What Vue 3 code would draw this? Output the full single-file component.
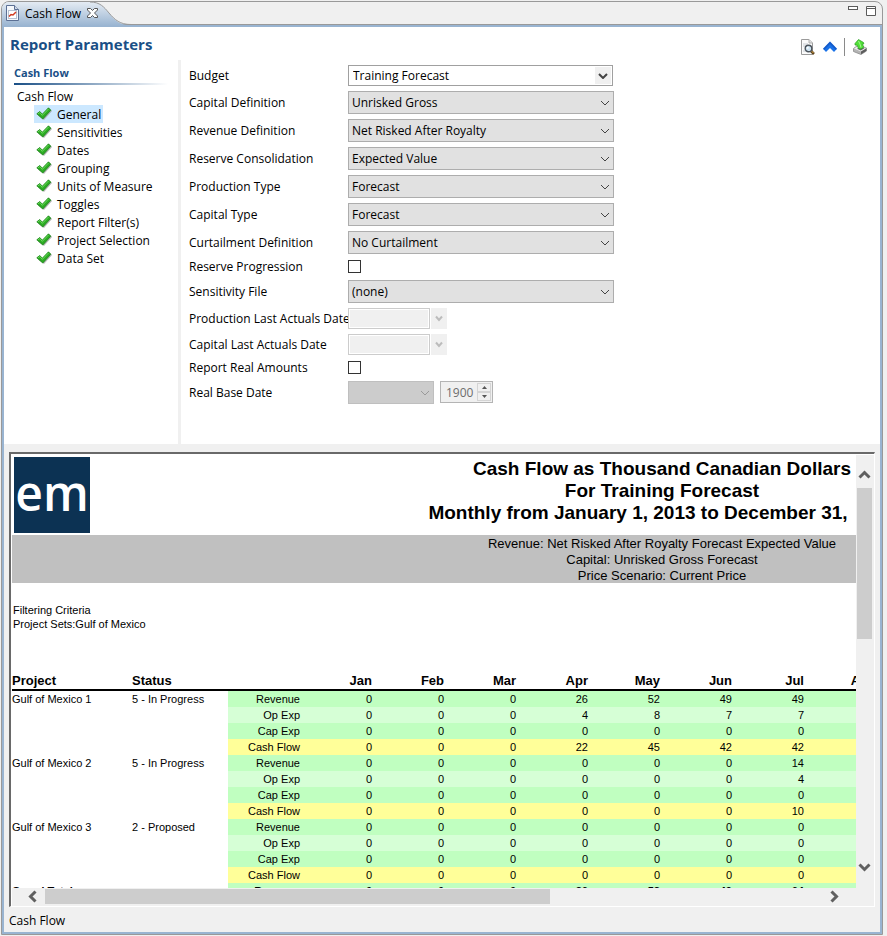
<script setup>
import { ref } from 'vue'

const sections = ['General', 'Sensitivities', 'Dates', 'Grouping', 'Units of Measure', 'Toggles', 'Report Filter(s)', 'Project Selection', 'Data Set']
const selected = ref('General')

const fields = [
  { id: 'budget', label: 'Budget', type: 'combo', value: 'Training Forecast' },
  { id: 'capdef', label: 'Capital Definition', type: 'select', value: 'Unrisked Gross' },
  { id: 'revdef', label: 'Revenue Definition', type: 'select', value: 'Net Risked After Royalty' },
  { id: 'rescon', label: 'Reserve Consolidation', type: 'select', value: 'Expected Value' },
  { id: 'prodtype', label: 'Production Type', type: 'select', value: 'Forecast' },
  { id: 'captype', label: 'Capital Type', type: 'select', value: 'Forecast' },
  { id: 'curtail', label: 'Curtailment Definition', type: 'select', value: 'No Curtailment' },
  { id: 'resprog', label: 'Reserve Progression', type: 'check' },
  { id: 'sens', label: 'Sensitivity File', type: 'select', value: '(none)' },
  { id: 'prodlast', label: 'Production Last Actuals Date', type: 'date' },
  { id: 'caplast', label: 'Capital Last Actuals Date', type: 'date' },
  { id: 'realamt', label: 'Report Real Amounts', type: 'check' },
  { id: 'realbase', label: 'Real Base Date', type: 'base' },
]

const months = ['Jan', 'Feb', 'Mar', 'Apr', 'May', 'Jun', 'Jul', 'Aug']
const zeros = [0, 0, 0, 0, 0, 0, 0]
const projects = [
  {
    name: 'Gulf of Mexico 1',
    status: '5 - In Progress',
    lines: [
      ['Revenue', [0, 0, 0, 26, 52, 49, 49]],
      ['Op Exp', [0, 0, 0, 4, 8, 7, 7]],
      ['Cap Exp', zeros],
      ['Cash Flow', [0, 0, 0, 22, 45, 42, 42]],
    ],
  },
  {
    name: 'Gulf of Mexico 2',
    status: '5 - In Progress',
    lines: [
      ['Revenue', [0, 0, 0, 0, 0, 0, 14]],
      ['Op Exp', [0, 0, 0, 0, 0, 0, 4]],
      ['Cap Exp', zeros],
      ['Cash Flow', [0, 0, 0, 0, 0, 0, 10]],
    ],
  },
  {
    name: 'Gulf of Mexico 3',
    status: '2 - Proposed',
    lines: [['Revenue', zeros], ['Op Exp', zeros], ['Cap Exp', zeros], ['Cash Flow', zeros]],
  },
  {
    name: 'Grand Total:',
    status: '',
    total: true,
    lines: [['Revenue', [0, 0, 0, 26, 52, 49, 64]]],
  },
]
const shade = { Revenue: 'green', 'Op Exp': 'pale', 'Cap Exp': 'green', 'Cash Flow': 'yellow' }
</script>

<template>
  <div class="screen">
    <div class="window">
      <div class="tabbar">
        <div class="tab">
          <svg class="tab-shape" width="130" height="24" viewBox="0 0 130 24" aria-hidden="true">
            <defs>
              <linearGradient id="tabfill" x1="0" y1="0" x2="0" y2="1">
                <stop offset="0" stop-color="#e4ebf3" />
                <stop offset="1" stop-color="#99b4d1" />
              </linearGradient>
            </defs>
            <path d="M0 24V0H90C98 0 102 5 107 11C113 19 118 23 128 23V24Z" fill="url(#tabfill)" />
            <path d="M88 0C98 0 102 5 107 11C113 18 118 22.500 129 22.500" fill="none" stroke="#999" />
          </svg>
          <svg class="tab-icon" width="13" height="16" viewBox="0 0 13 16" aria-hidden="true">
            <path d="M.5 .5H8.500L12.500 4.500V15.500H.5Z" fill="#f4f7fb" stroke="#5b6f94" />
            <path d="M8.500 .5V4.500H12.500" fill="#cfd9e8" stroke="#5b6f94" />
            <rect x="2.500" y="5.500" width="8" height="8" fill="#fff" stroke="#b6c1d2" />
            <path d="M3 11.500L5 9.500L7 10L10 7" fill="none" stroke="#d03a20" stroke-width="1.500" />
          </svg>
          <span class="tab-title">Cash Flow</span>
          <button class="bare" aria-label="Close tab">
            <svg width="11" height="10" viewBox="0 0 11 10">
              <path d="M.5 .5H3.500L5.500 2.500L7.500 .5H10.500V2L7.500 5L10.500 8V9.500H7.500L5.500 7.500L3.500 9.500H.5V8L3.500 5L.5 2Z" fill="#fff" stroke="#555" />
            </svg>
          </button>
        </div>
        <div class="win-buttons">
          <button class="bare" aria-label="Minimize">
            <svg width="10" height="10" viewBox="0 0 10 10"><rect x=".5" y=".5" width="9" height="3" fill="#fff" stroke="#5a5a5a" /></svg>
          </button>
          <button class="bare" aria-label="Maximize">
            <svg width="10" height="10" viewBox="0 0 10 10"><path d="M.5 .5H9.500V9.500H.5Z M.5 2.500H9.500" fill="#fff" stroke="#5a5a5a" /></svg>
          </button>
        </div>
      </div>

      <div class="body">
        <section class="params">
          <header class="params-head">
            <h1>Report Parameters</h1>
            <div class="tools">
              <button class="bare" aria-label="Preview">
                <svg width="16" height="16" viewBox="0 0 16 16">
                  <path d="M1.500 .5H9L12.500 4V15.500H1.500Z" fill="#fbfbfb" stroke="#9a9a9a" />
                  <path d="M9 .5V4H12.500" fill="#e2e2e2" stroke="#b0b0b0" />
                  <path d="M3 5H8M3 7H5M3 12H6" stroke="#c8cdd3" />
                  <path d="M10.500 11.500L14 15" stroke="#5e4520" stroke-width="2.500" />
                  <path d="M11.500 12L13.500 14" stroke="#e0aa4a" />
                  <circle cx="8.500" cy="9.500" r="3.300" fill="#cfe4f2" stroke="#4c545c" stroke-width="1.400" />
                  <circle cx="7.700" cy="8.700" r="1" fill="#fff" />
                </svg>
              </button>
              <button class="bare" aria-label="Collapse">
                <svg width="16" height="16" viewBox="0 0 16 16">
                  <path d="M8 2.500L15 9.800L12 13L8 9L4 13L1 9.800Z" fill="#1a72e8" />
                  <path d="M8 2.500L15 9.800L14 11L8 5L2 11L1 9.800Z" fill="#0b3ea6" opacity=".45" />
                </svg>
              </button>
              <span class="sep"></span>
              <button class="bare" aria-label="Export">
                <svg width="16" height="16" viewBox="0 0 16 16">
                  <path d="M1.500 9.500L5 7L14.500 9V12L9 15.500L1.500 12.500Z" fill="#b4b4b4" stroke="#8a8a8a" stroke-width=".8" />
                  <path d="M2 9.500L9 12.500L14 9.500L7 6.500Z" fill="#ededed" />
                  <path d="M9 12.500V15.200L14.200 12V9.500Z" fill="#5c5c5c" />
                  <path d="M5 9.800L8.800 11.500L12.500 9.300L8 8Z" fill="#6a6a6a" />
                  <path d="M6.500 .5L11.500 3.500L11.800 5L10.200 5.200L12 8L9 10L6.500 9.500L5.200 6.200L3 6L3 4.500Z" fill="#52e038" stroke="#2a9c20" stroke-width=".7" />
                  <path d="M6.500 2L8 5L9 8.500" fill="none" stroke="#a5f78f" />
                </svg>
              </button>
            </div>
          </header>

          <div class="params-body">
            <nav class="side">
              <h2>Cash Flow</h2>
              <div class="rule"></div>
              <p class="root">Cash Flow</p>
              <ul>
                <li v-for="s in sections" :key="s">
                  <button class="node" :class="{ on: s === selected }" @click="selected = s">
                    <svg width="16" height="14" viewBox="0 0 16 14" aria-hidden="true">
                      <path d="M2 8.500L4.500 6L7.500 8.500L14 2L16 4L8 13Z" fill="#9a9a9a" opacity=".7" />
                      <path d="M.8 6.800L3.800 4.500L6.300 7.200L12.500 .8L14.800 3.200L6.800 12Z" fill="#2cab23" stroke="#1b8418" stroke-width=".8" />
                      <path d="M2 6.800L3.800 5.600L6.300 8.400L12.500 2" fill="none" stroke="#6bdc5c" />
                    </svg>
                    <span>{{ s }}</span>
                  </button>
                </li>
              </ul>
            </nav>

            <form class="form" @submit.prevent>
              <template v-for="f in fields" :key="f.id">
                <label :for="f.id">{{ f.label }}</label>
                <div v-if="f.type === 'combo' || f.type === 'select'" class="pick" :class="f.type">
                  <select :id="f.id"><option>{{ f.value }}</option></select>
                  <span class="arrow">
                    <svg width="10" height="6" viewBox="0 0 10 6" aria-hidden="true"><path d="M1 1L5 5L9 1" /></svg>
                  </span>
                </div>
                <div v-else-if="f.type === 'check'" class="check-cell"><input :id="f.id" type="checkbox" class="check" /></div>
                <div v-else-if="f.type === 'date'" class="date">
                  <input :id="f.id" type="text" disabled />
                  <button type="button" disabled aria-label="Pick date">
                    <svg width="8" height="7" viewBox="0 0 8 7"><path d="M1 1.500L4 5L7 1.500" fill="none" stroke="#bcbcbc" stroke-width="2" /></svg>
                  </button>
                </div>
                <div v-else class="base">
                  <div class="pick select off">
                    <select :id="f.id" disabled><option></option></select>
                    <span class="arrow">
                      <svg width="10" height="6" viewBox="0 0 10 6" aria-hidden="true"><path d="M1 1L5 5L9 1" /></svg>
                    </span>
                  </div>
                  <div class="spin">
                    <input type="text" value="1900" disabled aria-label="Base year" />
                    <div class="spin-btns">
                      <button type="button" disabled aria-label="Increase"><svg width="5" height="3" viewBox="0 0 5 3"><path d="M0 3L2.500 0L5 3Z" fill="#555" /></svg></button>
                      <button type="button" disabled aria-label="Decrease"><svg width="5" height="3" viewBox="0 0 5 3"><path d="M0 0L2.500 3L5 0Z" fill="#555" /></svg></button>
                    </div>
                  </div>
                </div>
              </template>
            </form>
          </div>
        </section>

        <section class="viewer">
          <div class="sheet">
            <div class="page">
              <div class="page-head">
                <div class="logo">em</div>
                <div class="titles">
                  <p>Cash Flow as Thousand Canadian Dollars</p>
                  <p>For Training Forecast</p>
                  <p class="period">Monthly from January 1, 2013 to December 31,</p>
                </div>
              </div>
              <div class="band">
                <p>Revenue: Net Risked After Royalty Forecast Expected Value</p>
                <p>Capital: Unrisked Gross Forecast</p>
                <p>Price Scenario: Current Price</p>
              </div>
              <div class="criteria">
                <p>Filtering Criteria</p>
                <p>Project Sets:Gulf of Mexico</p>
              </div>
              <table>
                <colgroup>
                  <col class="c-project" />
                  <col class="c-status" />
                  <col class="c-num" />
                  <col v-for="m in months" :key="m" class="c-num" />
                  <col />
                </colgroup>
                <thead>
                  <tr>
                    <th class="left">Project</th>
                    <th class="left">Status</th>
                    <th></th>
                    <th v-for="m in months" :key="m">{{ m }}</th>
                    <th></th>
                  </tr>
                </thead>
                <tbody v-for="p in projects" :key="p.name" :class="{ total: p.total }">
                  <tr v-for="(l, i) in p.lines" :key="l[0]">
                    <td class="left">{{ i === 0 ? p.name : '' }}</td>
                    <td class="left">{{ i === 0 ? p.status : '' }}</td>
                    <td :class="shade[l[0]]">{{ l[0] }}</td>
                    <td v-for="(m, k) in months" :key="m" :class="shade[l[0]]">{{ l[1][k] }}</td>
                    <td :class="shade[l[0]]"></td>
                  </tr>
                </tbody>
              </table>
            </div>
          </div>
          <div class="vbar">
            <button class="bare" aria-label="Scroll up"><svg width="13" height="9" viewBox="0 0 13 9"><path d="M1.500 7.500L6.500 2.500L11.500 7.500" /></svg></button>
            <div class="vtrack"><div class="vthumb"></div></div>
            <button class="bare" aria-label="Scroll down"><svg width="13" height="9" viewBox="0 0 13 9"><path d="M1.500 1.500L6.500 6.500L11.500 1.500" /></svg></button>
          </div>
          <div class="hbar">
            <button class="bare" aria-label="Scroll left"><svg width="10" height="13" viewBox="0 0 10 13"><path d="M7.500 1.500L2.500 6.500L7.500 11.500" /></svg></button>
            <div class="htrack"><div class="hthumb"></div></div>
            <button class="bare" aria-label="Scroll right"><svg width="10" height="13" viewBox="0 0 10 13"><path d="M2.500 1.500L7.500 6.500L2.500 11.500" /></svg></button>
          </div>
        </section>
        <footer class="status">Cash Flow</footer>
      </div>
    </div>
  </div>
</template>

<style>
body {
  background: #f0f0f0;
}
</style>

<style scoped>
* {
  box-sizing: border-box;
}
p, h1, h2, ul {
  margin: 0;
  padding: 0;
}
.screen {
  display: flex;
  height: 100vh;
  min-height: 720px;
  padding: 1px 4px 1px 1px;
  font-family: "Open Sans", "Noto Sans", sans-serif;
  font-size: 12px;
  color: #000;
  background: #f0f0f0;
}
.window {
  flex: 1;
  min-width: 0;
  display: flex;
  flex-direction: column;
  border: 1px solid #999;
  border-radius: 8px 8px 0 0;
  overflow: hidden;
}
.bare {
  display: flex;
  align-items: center;
  justify-content: center;
  padding: 0;
  border: 0;
  background: none;
}
.tabbar {
  display: flex;
  justify-content: space-between;
  height: 23px;
  border-bottom: 1px solid #999;
}
.tab {
  position: relative;
  display: flex;
  align-items: center;
  gap: 6px;
  padding: 0 0 0 4px;
}
.tab > * {
  position: relative;
}
.tab .tab-shape {
  position: absolute;
  left: 0;
  top: 0;
}
.win-buttons {
  display: flex;
  align-items: flex-start;
  gap: 8px;
  padding: 4px 6px 0 0;
}
.body {
  flex: 1;
  min-height: 0;
  display: flex;
  flex-direction: column;
  border: 2px solid #99b4d1;
  background: #f0f0f0;
}
.params {
  background: #fff;
}
.params-head {
  display: flex;
  justify-content: space-between;
  align-items: center;
  height: 33px;
  padding: 0 12px 0 6px;
}
h1 {
  font-size: 15px;
  line-height: 20px;
  color: #1a4f86;
}
.tools {
  display: flex;
  align-items: center;
  gap: 6px;
  padding-top: 6px;
}
.sep {
  width: 1px;
  height: 18px;
  margin-right: 1px;
  background: #8a8a8a;
}
.params-body {
  display: flex;
}
.side {
  flex: none;
  width: 174px;
  padding: 4px 0 0 10px;
}
h2 {
  font-size: 11px;
  line-height: 18px;
  color: #1a4f86;
}
.rule {
  height: 2px;
  margin: 1px 10px 3px 0;
  background: linear-gradient(90deg, #1a4f86, #fff);
}
.root {
  padding-left: 3px;
  line-height: 17px;
}
ul {
  list-style: none;
  padding-left: 20px;
}
li {
  display: flex;
}
.node {
  display: flex;
  align-items: center;
  gap: 5px;
  height: 18px;
  padding: 0 2px 0 2px;
  border: 0;
  background: none;
  font: inherit;
  color: #000;
}
.node.on {
  background: #cce8ff;
}
.form {
  flex: 1;
  display: grid;
  grid-template-columns: 159px minmax(0, 266px);
  row-gap: 5px;
  align-items: center;
  padding: 5px 10px 40px 8px;
  border-left: 3px solid #f0f0f0;
}
.form label {
  white-space: nowrap;
  line-height: 16px;
}
.pick {
  position: relative;
  height: 23px;
}
.pick.combo {
  height: 21px;
  margin-right: 1px;
}
.pick select {
  display: block;
  width: 100%;
  height: 100%;
  padding: 0 20px 0 3px;
  appearance: none;
  border: 1px solid #adadad;
  border-radius: 0;
  background: #e1e1e1;
  color: #000;
  font: inherit;
  opacity: 1;
}
.pick.combo select {
  padding-left: 4px;
  background: #fff;
  border-color: #a0a0a0;
}
.pick.off select {
  background: #ccc;
  border-color: #bfbfbf;
}
.arrow {
  position: absolute;
  top: 2px;
  right: 1px;
  bottom: 2px;
  width: 16px;
  display: flex;
  align-items: center;
  justify-content: center;
  pointer-events: none;
}
.arrow path {
  fill: none;
  stroke: #444;
  stroke-width: 1;
}
.combo .arrow {
  right: 2px;
  background: #f0f0f0;
}
.combo .arrow path {
  stroke-width: 2;
}
.off .arrow path {
  stroke: #9a9a9a;
}
.check-cell {
  display: flex;
  align-items: flex-start;
  height: 16px;
  padding-top: 1px;
}
.check {
  width: 13px;
  height: 13px;
  margin: 0;
  appearance: none;
  border: 1px solid #333;
  background: #fff;
}
.check:checked {
  background: #333;
}
.date {
  display: flex;
  gap: 1px;
  height: 21px;
}
.date input {
  width: 82px;
  border: 1px solid #ccc;
  background: #f0f0f0;
  box-shadow: inset 0 0 0 1px #fff;
}
.date button {
  display: flex;
  align-items: center;
  justify-content: center;
  width: 16px;
  padding: 0;
  border: 0;
  background: #f0f0f0;
}
.base {
  display: flex;
  gap: 6px;
}
.base .pick {
  width: 86px;
}
.spin {
  display: flex;
  width: 53px;
  height: 22px;
  border: 1px solid #b4b4b4;
  background: #f0f0f0;
}
.spin input {
  flex: 1;
  min-width: 0;
  padding: 0 0 0 5px;
  border: 0;
  background: none;
  color: #6d6d6d;
  font: inherit;
}
.spin-btns {
  display: flex;
  flex-direction: column;
  width: 16px;
  padding: 1px;
}
.spin-btns button {
  flex: 1;
  display: flex;
  align-items: center;
  justify-content: center;
  padding: 0;
  border: 1px solid #d4d4d4;
  background: #f0f0f0;
}
.viewer {
  flex: 1;
  min-height: 0;
  display: grid;
  grid-template-columns: minmax(0, 1fr) 18px;
  grid-template-rows: minmax(0, 1fr) 18px;
  margin: 8px 5px 0;
  border: 1px solid #fff;
  border-top: 2px solid #696969;
  border-left: 2px solid #696969;
  box-shadow: inset 1px 1px 0 #fff;
  background: #f0f0f0;
}
.sheet {
  overflow: hidden;
  padding-left: 1px;
  background: #fff;
}
.page {
  width: 1300px;
  font-family: "Liberation Sans", Arial, sans-serif;
  font-size: 11px;
}
.page-head {
  position: relative;
  height: 81px;
  padding: 3px 2px;
}
.logo {
  position: absolute;
  width: 76px;
  height: 76px;
  overflow: hidden;
  background: #0c3253;
  color: #fff;
  font: 600 48px/72px "Open Sans", sans-serif;
  text-align: center;
}
.titles {
  padding-top: 1px;
  font-weight: bold;
  font-size: 19px;
  line-height: 22px;
  text-align: center;
}
.period {
  padding-right: 48px;
}
.band {
  height: 48px;
  padding-top: 1px;
  font-size: 13px;
  line-height: 16px;
  text-align: center;
  background: #c0c0c0;
}
.criteria {
  padding: 20px 1px 39px;
  line-height: 14px;
}
table {
  width: 100%;
  table-layout: fixed;
  border-collapse: collapse;
}
.c-project {
  width: 120px;
}
.c-status {
  width: 96px;
}
.c-num {
  width: 72px;
}
th {
  height: 20px;
  padding: 2px 0 0;
  font-size: 13px;
  line-height: 16px;
  text-align: right;
  border-bottom: 2px solid #000;
}
td {
  height: 16px;
  padding: 0;
  line-height: 16px;
  text-align: right;
}
.left {
  text-align: left;
}
.total {
  font-weight: bold;
}
.green {
  background: #c0ffc0;
}
.pale {
  background: #d6ffd6;
}
.yellow {
  background: #ffff99;
}
.vbar {
  display: flex;
  flex-direction: column;
  align-items: flex-start;
  padding: 16px 0 16px 1px;
}
.vbar .bare {
  width: 15px;
}
.vbar path, .hbar path {
  fill: none;
  stroke: #606060;
  stroke-width: 3;
}
.vtrack {
  flex: 1;
  width: 15px;
  padding: 9px 0 7px;
}
.vthumb {
  height: 41%;
  background: #cdcdcd;
}
.hbar {
  display: flex;
  align-items: flex-start;
  padding: 1px 17px 0;
}
.hbar .bare {
  height: 15px;
}
.htrack {
  flex: 1;
  height: 15px;
  padding: 0 7px;
}
.hthumb {
  width: 65%;
  height: 100%;
  background: #cdcdcd;
}
.status {
  padding: 5px 5px 2px;
  line-height: 18px;
}
</style>
